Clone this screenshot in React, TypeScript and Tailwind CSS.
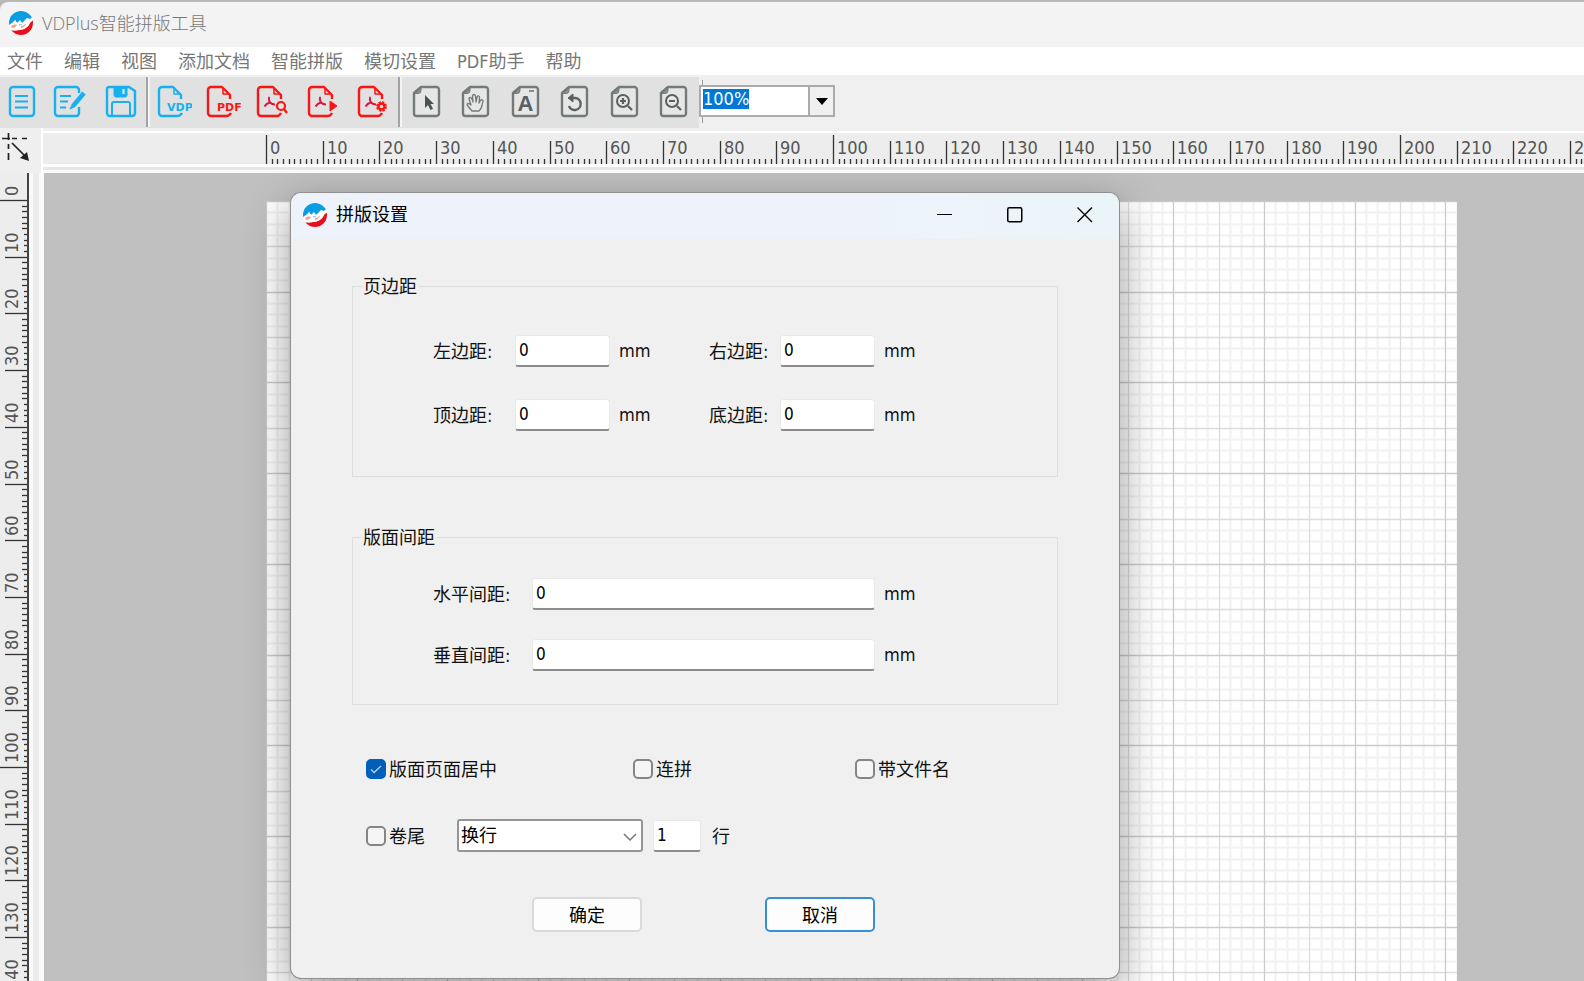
import { useEffect, useRef, type ReactNode } from "react";

const PX_PER_MM = 5.67;
const LATIN = "font-['DejaVu_Sans_Condensed','DejaVu_Sans','Noto_Sans_CJK_SC',sans-serif]";

function Logo() {
  return (
    <svg viewBox="0 0 24 24" className="size-6 shrink-0" aria-hidden="true">
      <defs>
        <clipPath id="disc">
          <circle cx="12" cy="12" r="12" />
        </clipPath>
      </defs>
      <g clipPath="url(#disc)">
        <rect width="24" height="24" fill="#fff" />
        <path d="M0 0h24v6l-2 1-1 1-3-1-3 3-2 2-2-3-3 3-2-3-3 3-3 2z" fill="#0a9de3" />
        <path d="M1 19c3 1 6 1 9 0 4 0 8-2 10-5 1-2 2-4 5-5v16H1z" fill="#e60f1e" />
        <path d="M6 8c1 4 3 5 4 3 1 3 4 3 5 0 1 2 3 0 5-3 2 5-2 9-6 10-3 1-6 2-11 0 3 0 5-1 6-3-1-1-3-4-3-7z" fill="#fff" />
        <path d="M2 15c2-1 4-2 6-1-1 2-3 3-5 3zM12 15c1 0 3 0 5-3 0 3-2 4-5 5z" fill="#f6a184" />
        <path d="M10 12.500c1 1 2 1 4 0-1 1.500-2 2-4 1.500z" fill="#7cc8ee" />
      </g>
    </svg>
  );
}

function Tool({ label, children }: { label: string; children: ReactNode }) {
  return (
    <button type="button" aria-label={label} className="size-9 shrink-0">
      <svg viewBox="0 0 36 36" className="size-9" fill="none" stroke="currentColor" strokeWidth="2.4" strokeLinejoin="round">
        {children}
      </svg>
    </button>
  );
}

const cutDoc = "M21 32H6a3 3 0 0 1-3-3V6a3 3 0 0 1 3-3h11l8 8v4";
const foldedCorner = "M18 4v6h6";

function PdfFile({ x, badge }: { x: number; badge: ReactNode }) {
  return (
    <g transform={`translate(${x} 0)`}>
      <path d="M25 15v-4l-8-8H5a3 3 0 0 0-3 3v23a3 3 0 0 0 3 3h16c2 0 3-1 4-3" />
      <path d="M18 4v6h6" strokeWidth="1.5" />
      <path d="M13.500 13c-1.200 1-.5 4 .5 5.500 1.500 1.500 3 2 5 2M14 18.500c-2 .5-4 1.500-5.500 4" strokeWidth="2" stroke="#d9153f" />
      {badge}
    </g>
  );
}

function GrayPage({ x, children }: { x: number; children: ReactNode }) {
  return (
    <g transform={`translate(${x} 0)`}>
      <path d="M8 3h15.500a2.500 2.500 0 0 1 2.500 2.500v24a2.500 2.500 0 0 1-2.500 2.500H3.500A2.500 2.500 0 0 1 1 29.500V9z" fill="#e6e6e6" strokeWidth="2.400" />
      <path d="M2 9.500h3a3 3 0 0 0 3-3V4z" fill="#8b9090" strokeWidth="1" />
      {children}
    </g>
  );
}

function Separator() {
  return <span className="h-[50px] w-1 shrink-0 border-l-2 border-[#a3a3a3] bg-[#f4f4f4]" />;
}

function ZoomBox() {
  const ref = useRef<HTMLInputElement>(null);
  useEffect(() => {
    ref.current?.focus();
    ref.current?.select();
  }, []);
  return (
    <div className="flex h-8 w-[136px] border-2 border-[#ababab] bg-white">
      <input
        ref={ref}
        aria-label="缩放"
        defaultValue="100%"
        className={`min-w-0 flex-1 pb-1 pl-[2px] text-lg leading-5 text-black outline-none selection:bg-[#0078d7] selection:text-white ${LATIN}`}
      />
      <button type="button" aria-label="选择缩放" className="flex w-[25px] items-center justify-center border-l-2 border-[#ababab] bg-[#f0f0f0]">
        <svg viewBox="0 0 12 7" className="h-[7px] w-3">
          <path d="M0 0h12L6 7z" fill="#000" />
        </svg>
      </button>
    </div>
  );
}

function Toolbar() {
  return (
    <div className="flex h-[51px] shrink-0 bg-[#f0f0f0]">
      <div className="flex items-center bg-[#e1e1e1] pr-[9px] pb-[2px]">
        <div className="flex w-[146px] gap-[13px] pl-1 text-[#17b0f0]">
          <Tool label="新建">
            <rect x="6" y="3" width="24" height="29" rx="3" />
            <path d="M11 12h13M11 17.500h13M11 23.500h13" strokeWidth="2" />
          </Tool>
          <Tool label="编辑">
            <path d="M26 9V6a3 3 0 0 0-3-3H5a3 3 0 0 0-3 3v23a3 3 0 0 0 3 3h18a3 3 0 0 0 3-3v-6" />
            <path d="M7 12h11M7 17.500h8M7 23.500h6" strokeWidth="2" />
            <path d="M31 9 20 22" strokeWidth="4.500" />
            <path d="m19 21-2 4 4-2z" fill="currentColor" strokeWidth="1" />
          </Tool>
          <Tool label="保存">
            <path d="M7 3h20l6 4v22a3 3 0 0 1-3 3H8a3 3 0 0 1-3-3V5a2 2 0 0 1 2-2z" />
            <path d="M12 3h13v8a2 2 0 0 1-2 2h-9a2 2 0 0 1-2-2z" fill="currentColor" strokeWidth="1" />
            <path d="M21.500 5v5" stroke="#bfe6f7" />
            <path d="M10 31V20a2 2 0 0 1 2-2h14a2 2 0 0 1 2 2v11" strokeWidth="2" />
          </Tool>
        </div>
        <Separator />
        <div className="flex w-[248px] gap-[13px] pl-[6px] text-[#fb1515]">
          <Tool label="VDP">
            <g className="text-[#17b0f0]" stroke="currentColor">
              <path d={cutDoc} />
              <path d={foldedCorner} strokeWidth="1.500" />
              <path d="M26 29c-1 2-2 3-5 3" />
              <text x="11" y="27" fontSize="11" fontWeight="700" fontFamily="DejaVu Sans" fill="currentColor" stroke="none">VDP</text>
            </g>
          </Tool>
          <Tool label="PDF">
            <path d={cutDoc} />
            <path d={foldedCorner} strokeWidth="1.500" />
            <path d="M26 29c-1 2-2 3-5 3" />
            <text x="12" y="27" fontSize="11" fontWeight="700" fontFamily="DejaVu Sans" fill="currentColor" stroke="none">PDF</text>
          </Tool>
          <Tool label="查找PDF">
            <PdfFile x={2} badge={<><circle cx="25" cy="22" r="4" fill="#e1e1e1" strokeWidth="2.2" /><path d="m28 25 3 4" /></>} />
          </Tool>
          <Tool label="运行PDF">
            <PdfFile x={4} badge={<path d="m23 17 7 5-7 5z" fill="currentColor" strokeWidth="1" />} />
          </Tool>
          <Tool label="PDF设置">
            <PdfFile
              x={5}
              badge={
                <>
                  <circle cx="24.500" cy="22.500" r="4.600" strokeWidth="1.600" strokeDasharray="2.400 1.200" />
                  <circle cx="24.500" cy="22.500" r="3" fill="#e1e1e1" strokeWidth="2.400" />
                </>
              }
            />
          </Tool>
        </div>
        <Separator />
        <div className="flex gap-[13px] pl-[7px] text-[#747979]">
          <Tool label="选择">
            <GrayPage x={4}>
              <path d="M12 11v13l3-3 2.500 5 2.500-1.200-2.500-4.800H21z" fill="#4c5252" stroke="none" />
            </GrayPage>
          </Tool>
          <Tool label="移动">
            <GrayPage x={4}>
              <path d="M10 27c-2-2-3-4-5-6 0-2 2-2 4 0l-2-6c0-2 2-2 3 0l1 3-.5-6c.5-2 2.500-2 3 0l.5 6 1-5c1-2 3-1 2.500 1L17 19l1.500-2.500c1-1.500 3-.5 2.500 1-1 3-1 7-4 9.500z" strokeWidth="1.300" />
            </GrayPage>
          </Tool>
          <Tool label="文字">
            <GrayPage x={5}>
              <text x="13.500" y="27" textAnchor="middle" fontSize="22" fontWeight="700" fontFamily="Liberation Sans" fill="#5a6060" stroke="none">A</text>
              <path d="M17 7h5" strokeWidth="1.600" />
            </GrayPage>
          </Tool>
          <Tool label="旋转">
            <GrayPage x={5}>
              <g stroke="#5a6060">
                <path d="M10 14h4a6 6 0 1 1-6 8" />
                <path d="m12 10-5 4 5 4z" fill="#5a6060" strokeWidth="1" />
              </g>
            </GrayPage>
          </Tool>
          <Tool label="放大">
            <GrayPage x={6}>
              <g stroke="#5a6060">
                <circle cx="12" cy="17" r="6" strokeWidth="2" />
                <path d="M12 14v6M9 17h6M17 22l4 4" strokeWidth="2.200" />
              </g>
            </GrayPage>
          </Tool>
          <Tool label="缩小">
            <GrayPage x={6}>
              <g stroke="#5a6060">
                <circle cx="12" cy="17" r="6" strokeWidth="2" />
                <path d="M9 17h6M17 22l4 4" strokeWidth="2.200" />
              </g>
            </GrayPage>
          </Tool>
        </div>
      </div>
      <div className="flex items-center bg-[linear-gradient(#999,#999)] bg-size-[1px_43px] bg-position-[3px_3px] bg-no-repeat pb-[3px]">
        <ZoomBox />
      </div>
    </div>
  );
}

function Ticks({ count, vertical }: { count: number; vertical?: boolean }) {
  const origin = vertical ? 27 : 225;
  const out: ReactNode[] = [];
  for (let mm = 0; mm <= count; mm++) {
    const at = Math.round(origin + mm * PX_PER_MM) + 0.5;
    const big = mm % 10 === 0;
    const huge = mm % 100 === 0;
    if (vertical) {
      const start = huge ? 0 : big ? 5 : mm % 10 > 5 ? 24 : 22;
      out.push(<path key={mm} d={`M${start} ${at}H28`} />);
    } else {
      const start = huge ? 7 : big ? 13 : 31;
      out.push(<path key={mm} d={`M${at} ${start}V36`} />);
    }
  }
  return (
    <g stroke="#333" strokeWidth="1.300">
      {out}
    </g>
  );
}

function HorizontalRuler() {
  return (
    <div className="flex h-[45px] shrink-0 bg-[#efefef]">
      <svg className="h-full w-[41px] shrink-0" fill="none" stroke="#222" strokeWidth="1.700">
        <path d="M2 10.500h30" strokeDasharray="8 2 5 5 5 5" />
        <path d="M8.500 5v30" strokeDasharray="7 4 5 4" />
        <path d="m12 15 14 14" />
        <path d="m29 33-9-3 7-6z" fill="#222" stroke="none" />
      </svg>
      <div className="flex min-w-0 flex-1 flex-col border-l-2 border-white pt-[3px]">
        <div className="relative flex-1 overflow-hidden border-t-2 border-white bg-[#ededed]">
          <svg className="absolute -top-[5px] -left-[2px] h-10 w-full overflow-visible">
            <Ticks count={240} />
            <g className={`text-lg ${LATIN}`} fill="#555">
              {Array.from({ length: 24 }, (_, i) => (
                <text key={i} x={Math.round(229 + i * 10 * PX_PER_MM)} y="26">
                  {i * 10}
                </text>
              ))}
            </g>
          </svg>
        </div>
        <div className="h-[3px] bg-white" />
        <div className="h-[3px] bg-[#e6e6e6]" />
        <div className="h-[3px] bg-[#fafafa]" />
      </div>
    </div>
  );
}

function VerticalRuler() {
  return (
    <div className="flex w-11 shrink-0 bg-[#ededed]">
      <div className="relative w-[29px] overflow-hidden border-r-2 border-[#444]">
        <svg className="absolute inset-0 h-full w-[28px]">
          <Ticks count={160} vertical />
          <g className={`text-lg ${LATIN}`} fill="#555">
            {Array.from({ length: 15 }, (_, i) => {
              const y = Math.round(23 + i * 10 * PX_PER_MM);
              return (
                <text key={i} x="18" y={y} transform={`rotate(-90 18 ${y})`}>
                  {i * 10}
                </text>
              );
            })}
          </g>
        </svg>
      </div>
      <div className="w-1 bg-[#fafafa]" />
      <div className="w-[6px] bg-[#ebebeb]" />
      <div className="flex-1 bg-[#fafafa]" />
    </div>
  );
}

function gridPath(step: number, skip: number) {
  let d = "";
  for (let i = 0; i * step < 1192; i++) {
    if (skip && i % skip === 0) continue;
    const p = Math.round(i * step) + 0.5;
    d += `M${p} 0V1684M0 ${p}H1191`;
  }
  return d;
}

function Page() {
  return (
    <svg className="h-[1684px] w-[1191px] bg-white" fill="none">
      <path d={gridPath(2 * PX_PER_MM, 4)} stroke="#f2f2f2" strokeWidth="2" />
      <path d={gridPath(8 * PX_PER_MM, 2)} stroke="#dcdcdc" strokeWidth="1.300" />
      <path d={gridPath(16 * PX_PER_MM, 0)} stroke="#cbcbcb" strokeWidth="1.300" />
    </svg>
  );
}

const field =
  "h-8 w-full rounded-[3px] border border-[#e9e9e9] border-b-2 border-b-[#8c8c8c] bg-white pb-[1px] pl-[3px] text-[17px] text-black outline-none";

function Field({ id, label, value }: { id: string; label: string; value: string }) {
  return (
    <>
      <label htmlFor={id} className="pt-[2px]">{label}</label>
      <input id={id} defaultValue={value} className={`${field} ${LATIN}`} />
      <span className="pl-[9px]">mm</span>
    </>
  );
}

function Check({ label, checked }: { label: string; checked?: boolean }) {
  return (
    <label className="flex items-center gap-[3px]">
      <span className="relative flex size-5">
        <input
          type="checkbox"
          defaultChecked={checked}
          className="peer size-5 appearance-none rounded-[5px] border-2 border-[#858585] bg-[#f5f5f5] checked:border-[#005fb8] checked:bg-[#005fb8]"
        />
        <svg viewBox="0 0 20 20" className="pointer-events-none absolute inset-0 hidden size-5 peer-checked:block" fill="none" stroke="#b5d2ec" strokeWidth="1.300">
          <path d="m5 10.500 3.200 3L15 7" />
        </svg>
      </span>
      <span className="pt-[2px]">{label}</span>
    </label>
  );
}

function SettingsDialog() {
  return (
    <section
      role="dialog"
      aria-label="拼版设置"
      className="absolute top-[20px] left-[247px] w-[828px] rounded-[10px] bg-[#f0f0f0] text-lg leading-5 text-[#111] shadow-[0_0_0_1px_#8f8f8f,0_14px_44px_rgba(0,0,0,0.42)]"
    >
      <header className="flex h-[46px] items-center rounded-t-[10px] bg-linear-to-r from-[#eef3fb] from-70% to-[#eaf5f8] pr-[26px] pb-[3px] pl-3">
        <Logo />
        <h2 className="flex-1 pl-[9px] text-black">拼版设置</h2>
        <div className="flex gap-[54px] text-black">
          <button type="button" aria-label="最小化" className="size-4">
            <svg viewBox="0 0 16 16" className="size-4" stroke="currentColor"><path d="M0 7.500h15" /></svg>
          </button>
          <button type="button" aria-label="最大化" className="size-4">
            <svg viewBox="0 0 16 16" className="size-4" fill="none" stroke="currentColor" strokeWidth="1.500"><rect x="0.750" y="0.750" width="14" height="14" rx="1.500" /></svg>
          </button>
          <button type="button" aria-label="关闭" className="size-4">
            <svg viewBox="0 0 16 16" className="size-4" stroke="currentColor" strokeWidth="1.400"><path d="m.5.5 14.500 14.500M15 .5.5 15" /></svg>
          </button>
        </div>
      </header>
      <form className="px-[61px] pt-[36px] pb-[46px]" onSubmit={(e) => e.preventDefault()}>
        <fieldset className="border border-[#dedede] pb-[45px] pl-[80px]">
          <legend className="-ml-[70px] pt-[2px] pr-[2px]">页边距</legend>
          <div className="grid grid-cols-[82px_95px_99px_71px_95px_auto] items-center gap-y-8 pt-[38px]">
            <Field id="left" label="左边距:" value="0" />
            <Field id="right" label="右边距:" value="0" />
            <Field id="top" label="顶边距:" value="0" />
            <Field id="bottom" label="底边距:" value="0" />
          </div>
        </fieldset>
        <fieldset className="mt-[49px] border border-[#dedede] pb-[33px] pl-[80px]">
          <legend className="-ml-[70px] pt-[2px] pr-[2px]">版面间距</legend>
          <div className="grid grid-cols-[99px_343px_auto] items-center gap-y-[29px] pt-[30px]">
            <Field id="hgap" label="水平间距:" value="0" />
            <Field id="vgap" label="垂直间距:" value="0" />
          </div>
        </fieldset>
        <div className="mt-[53px] grid grid-cols-[267px_222px_auto] pl-[14px]">
          <Check label="版面页面居中" checked />
          <Check label="连拼" />
          <Check label="带文件名" />
        </div>
        <div className="mt-[39px] flex items-center pl-[14px]">
          <div className="w-[91px]">
            <Check label="卷尾" />
          </div>
          <div className="relative w-[186px]">
            <select aria-label="卷尾方式" className="h-[33px] w-full appearance-none rounded-[3px] border-2 border-[#959595] bg-white pl-[2px] text-black">
              <option>换行</option>
            </select>
            <svg viewBox="0 0 14 8" className="pointer-events-none absolute top-[14px] right-[6px] h-2 w-[14px]" fill="none" stroke="#777" strokeWidth="1.500">
              <path d="m1 1 6 6 6-6" />
            </svg>
          </div>
          <div className="mr-[11px] ml-[10px] w-[48px]">
            <input aria-label="行数" id="rows" defaultValue="1" className={`${field} ${LATIN}`} />
          </div>
          <label htmlFor="rows" className="pt-[2px]">行</label>
        </div>
        <div className="mt-[45px] flex gap-[123px] pl-[180px]">
          <button type="submit" className="h-[35px] w-[110px] rounded-[5px] border-2 border-[#dadada] bg-[#fdfdfd] pt-[2px] text-black">确定</button>
          <button type="button" className="h-[35px] w-[110px] rounded-[5px] border-2 border-[#3a8fd3] bg-[#fdfdfd] pt-[2px] text-black">取消</button>
        </div>
      </form>
    </section>
  );
}

const menus = ["文件", "编辑", "视图", "添加文档", "智能拼版", "模切设置", "PDF助手", "帮助"];

export default function App() {
  return (
    <div className={`flex h-screen flex-col overflow-hidden bg-[#b8b8b8] ${LATIN}`}>
      <header className="mt-[2px] flex h-[45px] shrink-0 items-center gap-[9px] rounded-tl-[8px] bg-[#f3f3f3] pb-[3px] pl-[9px]">
        <Logo />
        <h1 className="font-['Open_Sans','Noto_Sans_CJK_SC',sans-serif] text-lg leading-6 font-light text-[#777]">VDPlus智能拼版工具</h1>
      </header>
      <nav className="flex h-[30px] shrink-0 items-center gap-[21px] border-b-2 border-[#f0f0f0] bg-white pt-[1px] pl-[7px] text-lg leading-6 text-[#777]">
        {menus.map((m) => (
          <button key={m} type="button" className="shrink-0">{m}</button>
        ))}
      </nav>
      <Toolbar />
      <HorizontalRuler />
      <div className="flex min-h-0 flex-1">
        <VerticalRuler />
        <main className="relative min-w-0 flex-1 overflow-hidden bg-[#c0c0c0] pt-[28px] pl-[222px]">
          <Page />
          <SettingsDialog />
        </main>
      </div>
    </div>
  );
}
